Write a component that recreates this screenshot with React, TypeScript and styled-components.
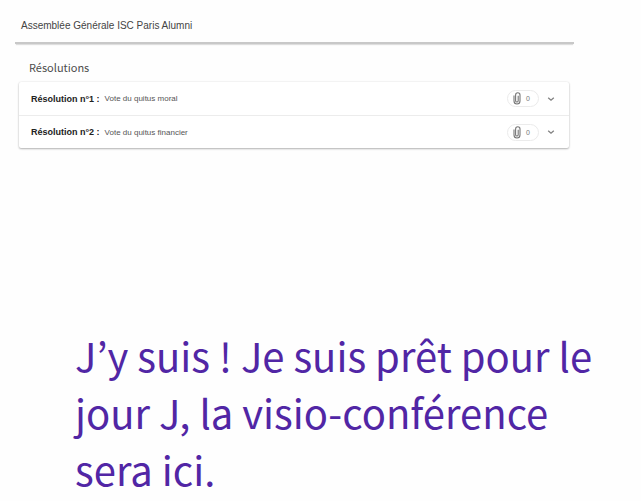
import React from "react";
import styled, { createGlobalStyle } from "styled-components";

const GlobalStyle = createGlobalStyle`
  * { box-sizing: border-box; }
  body {
    margin: 0;
    background: #fefefe;
    font-family: "Liberation Sans", Arial, sans-serif;
  }
`;

const Page = styled.main`
  display: flex;
  flex-direction: column;
`;

const Assembly = styled.section`
  display: flex;
  flex-direction: column;
  padding: 0 67px 0 15px;
`;

const Header = styled.header`
  padding: 18px 6px 8px;
  border-bottom: 2px solid #c8c8c8;
  box-shadow: 0 2px 1px -1px #dedede;
`;

const Title = styled.h1`
  margin: 0;
  font-size: 10px;
  font-weight: 400;
  line-height: 16px;
  color: #444;
`;

const Subtitle = styled.h2`
  margin: 0;
  padding: 14px 14px 6px;
  font-family: "Noto Sans CJK KR", sans-serif;
  font-size: 11px;
  font-weight: 400;
  line-height: 18px;
  color: #4c4c4c;
`;

const Card = styled.ul`
  margin: 0 5px 0 4px;
  padding: 0;
  list-style: none;
  background: #fff;
  border-radius: 2px;
  box-shadow: 0 1px 2px #b4b4b4, 0 0 2px #e4e4e4;
`;

const Row = styled.li`
  display: flex;
  align-items: center;
  height: 33px;
  padding: 0 14px 0 12px;

  & + & {
    border-top: 1px solid #ececec;
  }
`;

const Name = styled.strong`
  margin-right: 5px;
  font-size: 9px;
  font-weight: 700;
  color: #222;
`;

const Description = styled.span`
  flex: 1;
  font-size: 8px;
  color: #555;
`;

const Attachments = styled.button`
  display: flex;
  align-items: center;
  gap: 5px;
  height: 17px;
  width: 32px;
  padding: 0 5px;
  border: 1px solid #ebebeb;
  border-radius: 9px;
  background: #fff;
  font-family: inherit;
  font-size: 7px;
  color: #777;
`;

const Toggle = styled.button`
  display: flex;
  margin-left: 8px;
  padding: 0;
  border: 0;
  background: none;
  color: #808080;
`;

const Message = styled.p`
  margin: 179px 0 0;
  padding: 0 32px 0 75px;
  font-family: "Noto Sans CJK KR", sans-serif;
  font-size: 40px;
  line-height: 57px;
  color: #5126a5;
`;

const Paperclip = () => (
  <svg width="8" height="13" viewBox="0 0 8 13" fill="none" stroke="#777" strokeWidth="1.1" aria-hidden="true">
    <path d="M1 3.5V9a3 3 0 0 0 6 0V3a2.2 2.2 0 0 0-4.4 0v5.7a1.3 1.3 0 0 0 2.6 0V3.8" />
  </svg>
);

const Chevron = () => (
  <svg width="8" height="8" viewBox="0 0 8 8" fill="none" stroke="currentColor" strokeWidth="1.3" aria-hidden="true">
    <path d="M1.2 2.8L4 5.2l2.8-2.4" />
  </svg>
);

const resolutions = [
  { name: "Résolution n°1 :", description: "Vote du quitus moral", files: 0 },
  { name: "Résolution n°2 :", description: "Vote du quitus financier", files: 0 },
];

export default function App() {
  return (
    <>
      <GlobalStyle />
      <Page>
        <Assembly>
          <Header>
            <Title>Assemblée Générale ISC Paris Alumni</Title>
          </Header>
          <Subtitle>Résolutions</Subtitle>
          <Card>
            {resolutions.map((item) => (
              <Row key={item.name}>
                <Name>{item.name}</Name>
                <Description>{item.description}</Description>
                <Attachments type="button">
                  <Paperclip />
                  {item.files}
                </Attachments>
                <Toggle type="button" aria-label={item.name}>
                  <Chevron />
                </Toggle>
              </Row>
            ))}
          </Card>
        </Assembly>
        <Message>J’y suis ! Je suis prêt pour le jour J, la visio-conférence sera ici.</Message>
      </Page>
    </>
  );
}
